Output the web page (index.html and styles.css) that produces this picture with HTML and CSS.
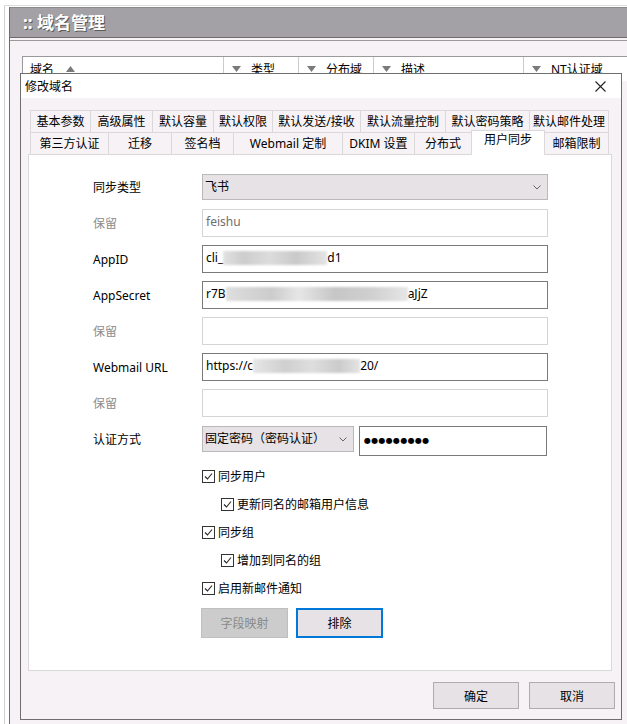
FILE: index.html
```html
<!DOCTYPE html>
<html lang="zh-CN">
  <head>
    <meta charset="UTF-8" />
    <title>域名管理</title>
    <link rel="stylesheet" href="styles.css">
  </head>
  <body>
    <div class="frame">
      <div class="main">
        <div class="page-title">:: 域名管理</div>
        <div class="content">
          <div class="grid-head">
            <div class="col col-name">域名
              <svg class="sort" width="9" height="6" viewBox="0 0 9 6"><path d="M0 6 L4.5 0 L9 6 Z" fill="#7a7a7a"/></svg>
            </div>
            <div class="col col-type">
              <svg class="sort" width="9" height="6" viewBox="0 0 9 6"><path d="M0 0 L9 0 L4.5 6 Z" fill="#7a7a7a"/></svg>类型
            </div>
            <div class="col col-dist">
              <svg class="sort" width="9" height="6" viewBox="0 0 9 6"><path d="M0 0 L9 0 L4.5 6 Z" fill="#7a7a7a"/></svg>分布域
            </div>
            <div class="col col-desc">
              <svg class="sort" width="9" height="6" viewBox="0 0 9 6"><path d="M0 0 L9 0 L4.5 6 Z" fill="#7a7a7a"/></svg>描述
            </div>
            <div class="col col-nt">
              <svg class="sort" width="9" height="6" viewBox="0 0 9 6"><path d="M0 0 L9 0 L4.5 6 Z" fill="#7a7a7a"/></svg>NT认证域
            </div>
          </div>
        </div>
      </div>
    </div>

    <div class="dialog">
      <div class="dialog-title">
        <span>修改域名</span>
        <svg width="11" height="11" viewBox="0 0 11 11"><path d="M0.5 0.5 L10.5 10.5 M10.5 0.5 L0.5 10.5" stroke="#222" stroke-width="1.1"/></svg>
      </div>
      <div class="dialog-body">
        <div class="tabs">
          <div class="tab-row">
            <div class="tab w60">基本参数</div>
            <div class="tab w62">高级属性</div>
            <div class="tab w61">默认容量</div>
            <div class="tab w59">默认权限</div>
            <div class="tab w88">默认发送/接收</div>
            <div class="tab w85">默认流量控制</div>
            <div class="tab w84">默认密码策略</div>
            <div class="tab w80">默认邮件处理</div>
          </div>
          <div class="tab-row">
            <div class="tab w78">第三方认证</div>
            <div class="tab w63">迁移</div>
            <div class="tab w62">签名档</div>
            <div class="tab w109">Webmail 定制</div>
            <div class="tab w72">DKIM 设置</div>
            <div class="tab w57">分布式</div>
            <div class="tab w74 active">用户同步</div>
            <div class="tab w65">邮箱限制</div>
          </div>
        </div>
        <div class="panel">
          <div class="form">
            <div class="row">
              <label>同步类型</label>
              <div class="select wide">飞书
                <svg class="chev" width="8" height="5" viewBox="0 0 8 5"><path d="M0.5 0.5 L4 4 L7.5 0.5" fill="none" stroke="#666"/></svg>
              </div>
            </div>
            <div class="row">
              <label class="muted">保留</label>
              <div class="field off">feishu</div>
            </div>
            <div class="row">
              <label>AppID</label>
              <div class="field">cli_<span class="blur b1"></span>d1</div>
            </div>
            <div class="row">
              <label>AppSecret</label>
              <div class="field">r7B<span class="blur b2"></span>aJjZ</div>
            </div>
            <div class="row">
              <label class="muted">保留</label>
              <div class="field off"></div>
            </div>
            <div class="row">
              <label>Webmail URL</label>
              <div class="field">https://c<span class="blur b3"></span>20/</div>
            </div>
            <div class="row">
              <label class="muted">保留</label>
              <div class="field off"></div>
            </div>
            <div class="row auth">
              <label>认证方式</label>
              <div class="select narrow">固定密码（密码认证）
                <svg class="chev" width="8" height="5" viewBox="0 0 8 5"><path d="M0.5 0.5 L4 4 L7.5 0.5" fill="none" stroke="#666"/></svg>
              </div>
              <div class="field pass">●●●●●●●●●</div>
            </div>

            <div class="checks">
              <div class="check"><span class="box"><svg width="11" height="11" viewBox="0 0 11 11"><path d="M2 5.5 L4.5 8 L9 2.5" fill="none" stroke="#222" stroke-width="1.1"/></svg></span>同步用户</div>
              <div class="check sub"><span class="box"><svg width="11" height="11" viewBox="0 0 11 11"><path d="M2 5.5 L4.5 8 L9 2.5" fill="none" stroke="#222" stroke-width="1.1"/></svg></span>更新同名的邮箱用户信息</div>
              <div class="check"><span class="box"><svg width="11" height="11" viewBox="0 0 11 11"><path d="M2 5.5 L4.5 8 L9 2.5" fill="none" stroke="#222" stroke-width="1.1"/></svg></span>同步组</div>
              <div class="check sub"><span class="box"><svg width="11" height="11" viewBox="0 0 11 11"><path d="M2 5.5 L4.5 8 L9 2.5" fill="none" stroke="#222" stroke-width="1.1"/></svg></span>增加到同名的组</div>
              <div class="check"><span class="box"><svg width="11" height="11" viewBox="0 0 11 11"><path d="M2 5.5 L4.5 8 L9 2.5" fill="none" stroke="#222" stroke-width="1.1"/></svg></span>启用新邮件通知</div>
            </div>
            <div class="actions">
              <button class="btn disabled">字段映射</button>
              <button class="btn focus">排除</button>
            </div>
          </div>
        </div>
      </div>
      <div class="dialog-foot">
        <button class="btn foot">确定</button>
        <button class="btn foot">取消</button>
      </div>
    </div>
  </body>
</html>
```

FILE: styles.css
```css
body {
  margin: 0;
  background: #fff;
  font-family: "Noto Sans", "Noto Sans CJK SC", sans-serif;
  font-size: 12px;
  color: #000;
}
.frame {
  margin: 5px 0 0 4px;
  border-left: 1px solid #cfcfcf;
  border-top: 1px solid #dcdcdc;
  padding: 1px 0 0 4px;
  height: 718px;
}
.main {
  height: 100%;
  border-left: 1px solid #6b6b6b;
  border-top: 1px solid #8a8a8a;
  background: #f6f2f5;
}
.page-title {
  height: 29px;
  line-height: 29px;
  padding-left: 13px;
  background: #a3a1a5;
  border-bottom: 1px solid #6b6b6b;
  color: #fff;
  font-size: 17px;
  font-weight: bold;
  text-shadow: 1px 1px 0 #5a5a5a;
}
.content {
  margin-top: 2px;
  border-top: 1px solid #9a9a9a;
  padding: 15px 0 0 12px;
}
.grid-head {
  display: flex;
  height: 24px;
  background: #fff;
  border-left: 1px solid #9a9a9a;
  border-top: 1px solid #9a9a9a;
  overflow: hidden;
}
.col {
  display: flex;
  align-items: center;
  gap: 10px;
  padding-left: 8px;
  box-sizing: border-box;
  border-right: 1px solid #cccccc;
  flex: none;
}
.col-name { width: 201px; padding-left: 7px; gap: 12px; }
.col-type { width: 75px; }
.col-dist { width: 75px; }
.col-desc { width: 150px; }
.col-nt { width: 120px; border-right: none; }

/* dialog */
.dialog {
  position: absolute;
  left: 20px;
  top: 73px;
  width: 600px;
  height: 645px;
  border: 1px solid #6e6e6e;
  background: #f6f2f5;
}
.dialog-title {
  height: 24px;
  background: #fff;
  display: flex;
  align-items: center;
  justify-content: space-between;
  padding: 0 15px 0 4px;
}
.dialog-body {
  padding: 12px 9px 0 7px;
}
.tabs {
  margin-left: 2px;
}
.tab-row {
  display: flex;
  height: 22px;
}
.tab {
  box-sizing: border-box;
  height: 22px;
  line-height: 21px;
  border-top: 1px solid #d9d9d9;
  border-left: 1px solid #d9d9d9;
  background: #f6f2f5;
  text-align: center;
  white-space: nowrap;
  flex: none;
}
.tab:last-child {
  border-right: 1px solid #d9d9d9;
}
.tab.active {
  position: relative;
  z-index: 1;
  height: 25px;
  margin-top: -2px;
  margin-right: -1px;
  line-height: 18px;
  background: #fff;
  border-right: 1px solid #d9d9d9;
}
.w57 { width: 57px; }
.w59 { width: 59px; }
.w60 { width: 60px; }
.w61 { width: 61px; }
.w62 { width: 62px; }
.w63 { width: 63px; }
.w65 { width: 65px; }
.w72 { width: 72px; }
.w74 { width: 74px; }
.w78 { width: 78px; }
.w80 { width: 80px; }
.w84 { width: 84px; }
.w85 { width: 85px; }
.w88 { width: 88px; }
.w109 { width: 109px; }

.panel {
  box-sizing: border-box;
  height: 517px;
  background: #fff;
  border: 1px solid #d9d9d9;
}
.form {
  padding: 18px 0 0 64px;
}
.row {
  display: flex;
  align-items: center;
  height: 28px;
  margin-bottom: 8px;
}
.row label {
  width: 109px;
  flex: none;
}
.row label.muted {
  color: #8c8c8c;
}
.field {
  box-sizing: border-box;
  width: 346px;
  height: 28px;
  border: 1px solid #7a7a7a;
  padding-left: 3px;
  line-height: 24px;
  white-space: nowrap;
  overflow: hidden;
}
.field.off {
  border-color: #d5d5d5;
  color: #6e6e6e;
}
.select {
  position: relative;
  box-sizing: border-box;
  height: 26px;
  line-height: 23px;
  padding-left: 2px;
  background: #e6e2e6;
  border: 1px solid #b9b9b9;
}
.select.wide { width: 346px; }
.select.narrow { width: 152px; }
.chev {
  position: absolute;
  right: 6px;
  top: 10px;
}
.row.auth {
  align-items: flex-start;
  height: 31px;
  margin-bottom: 0;
}
.row.auth label {
  line-height: 28px;
  margin-top: 1px;
}
.row.auth .select {
  margin-top: 1px;
}
.field.pass {
  width: 188px;
  height: 30px;
  margin: 1px 0 0 5px;
  line-height: 27px;
  font-family: "DejaVu Sans", sans-serif;
  font-size: 8px;
  padding-left: 4px;
  letter-spacing: 0.3px;
}
.blur {
  display: inline-block;
  height: 14px;
  vertical-align: -3px;
  filter: blur(1.2px);
}
.b1 {
  width: 104px;
  background: linear-gradient(90deg, #e2e2e2, #cdcdcd 20%, #dcdcdc 45%, #c9c9c9 70%, #e4e4e4);
}
.b2 {
  width: 182px;
  background: linear-gradient(90deg, #dedede, #cccccc 25%, #e6e6e6 40%, #c6c6c6 60%, #d0d0d0 80%, #e6e6e6);
}
.b3 {
  width: 107px;
  background: linear-gradient(90deg, #e6e6e6, #cfcfcf 30%, #dedede 55%, #cbcbcb 80%, #e4e4e4);
}

.checks {
  margin: 6px 0 0 109px;
}
.check {
  display: flex;
  align-items: center;
  height: 28px;
}
.check.sub {
  padding-left: 19px;
}
.box {
  box-sizing: border-box;
  width: 13px;
  height: 13px;
  border: 1px solid #333;
  margin-right: 3px;
  display: flex;
  align-items: center;
  justify-content: center;
  background: #fff;
}
.actions {
  display: flex;
  gap: 8px;
  margin: 6px 0 0 108px;
}
.btn {
  box-sizing: border-box;
  width: 87px;
  height: 30px;
  font-family: inherit;
  font-size: 12px;
  color: #000;
  background: #e6e2e6;
  border: 1px solid #adadad;
  padding: 0;
}
.btn.disabled {
  background: #cccccc;
  border-color: #bfbfbf;
  color: #8a8a8a;
}
.btn.focus {
  border: 2px solid #0078d7;
}
.dialog-foot {
  display: flex;
  justify-content: flex-end;
  gap: 10px;
  padding: 11px 6px 0 0;
}
.btn.foot {
  width: 86px;
  height: 27px;
}
```
